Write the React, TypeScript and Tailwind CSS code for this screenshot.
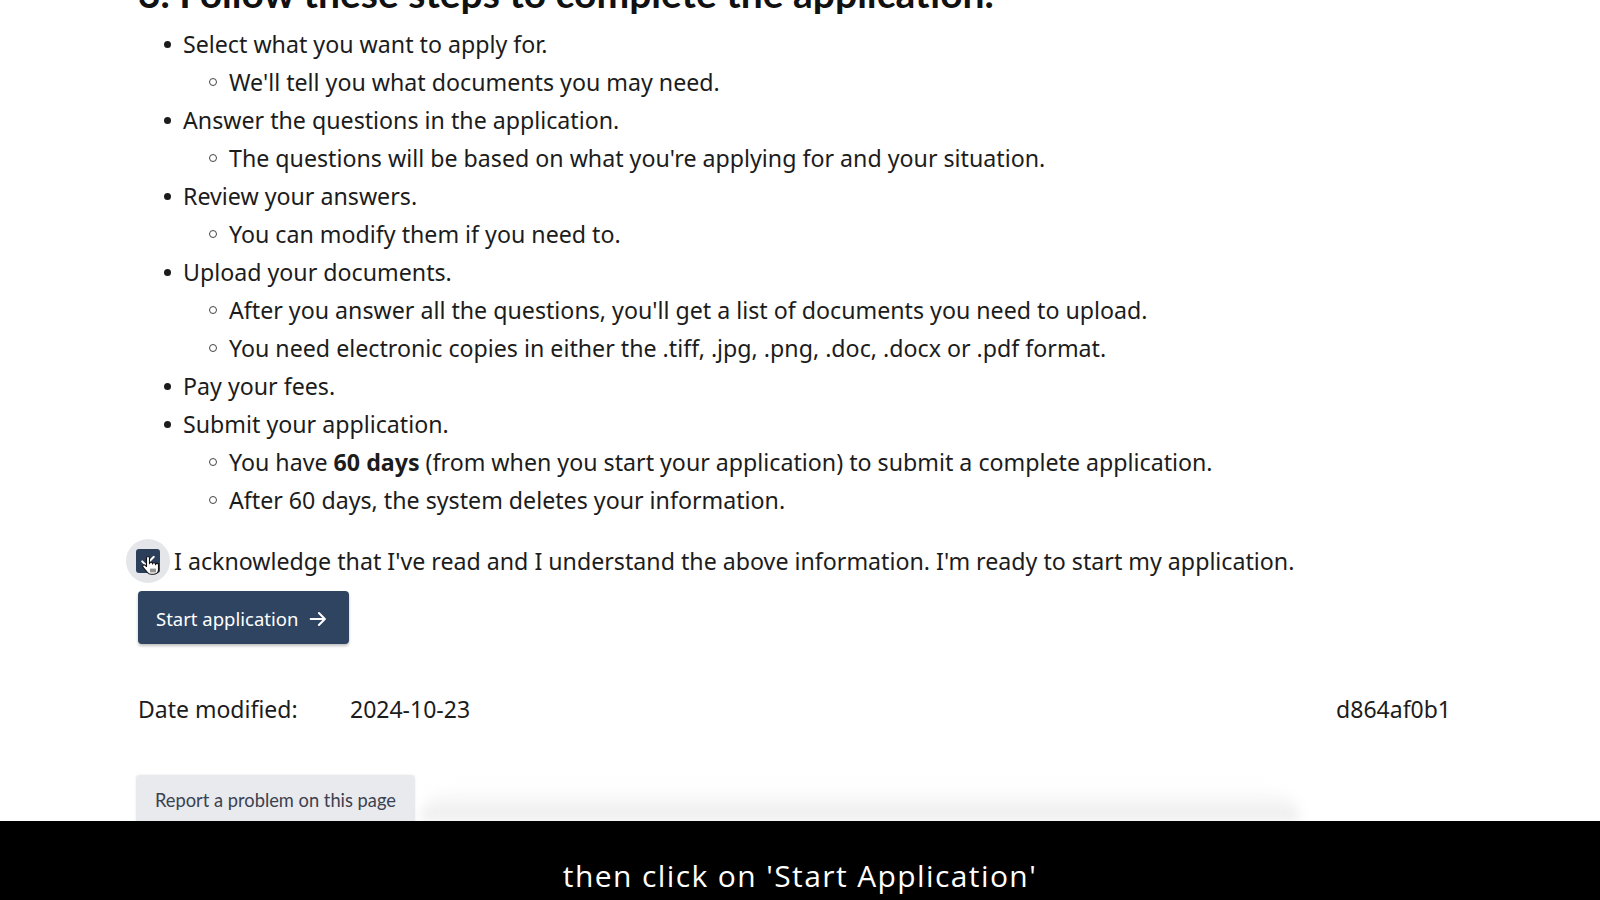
import React from "react";

const steps: { text: React.ReactNode; sub: React.ReactNode[] }[] = [
  {
    text: "Select what you want to apply for.",
    sub: ["We'll tell you what documents you may need."]
  },
  {
    text: "Answer the questions in the application.",
    sub: [
      "The questions will be based on what you're applying for and your situation."
    ]
  },
  {
    text: "Review your answers.",
    sub: ["You can modify them if you need to."]
  },
  {
    text: "Upload your documents.",
    sub: [
      "After you answer all the questions, you'll get a list of documents you need to upload.",
      "You need electronic copies in either the .tiff, .jpg, .png, .doc, .docx or .pdf format."
    ]
  },
  { text: "Pay your fees.", sub: [] },
  {
    text: "Submit your application.",
    sub: [
      <>
        You have <strong className="font-bold">60 days</strong> (from when you
        start your application) to submit a complete application.
      </>,
      "After 60 days, the system deletes your information."
    ]
  }
];

const body = { fontFamily: '"Noto Sans", "Open Sans", sans-serif' };

function HandCursor() {
  return (
    <svg
      viewBox="0 0 17 21"
      className="pointer-events-none absolute left-[142px] top-[555px] h-[21px] w-[17px]"
    >
      <path
        d="M6 1.5c-.8 0-1.5.7-1.5 1.5v8.5l-1.2-1.2c-.6-.6-1.6-.6-2.2 0-.6.6-.6 1.5 0 2.1l4.4 5.1c.9 1.1 2.2 1.7 3.6 1.7h2.9c2.6 0 4.5-2 4.5-4.6V9.8c0-.8-.7-1.4-1.5-1.4s-1.5.6-1.5 1.4V9c0-.8-.7-1.4-1.5-1.4S10.5 8.2 10.5 9v-.3c0-.8-.7-1.4-1.5-1.4s-1.5.6-1.5 1.4V3c0-.8-.7-1.5-1.5-1.5z"
        fill="#fff"
        stroke="#111"
        strokeWidth="1.1"
        strokeLinejoin="round"
      />
      <path
        d="M9 14v3M11 14v3M13 14v3"
        stroke="#111"
        strokeWidth="0.9"
        strokeLinecap="round"
      />
    </svg>
  );
}

export default function App() {
  return (
    <div className="relative flex h-[900px] w-full flex-col overflow-hidden bg-white">
      <div className="relative h-[821px] overflow-hidden bg-white">
        <div className="pl-[138px] text-[#1c1c1c]" style={body}>
          <h2
            className="mt-[-30px] text-[39px] font-bold leading-[46px] text-[#111]"
            style={{ fontFamily: 'Lato, "Noto Sans", sans-serif' }}
          >
            3. Follow these steps to complete the application.
          </h2>

          <ul className="mt-[9px] text-[23.2px]">
            {steps.map((s, i) => (
              <li key={i}>
                <div className="flex h-[38px] items-center">
                  <span className="ml-[26px] mr-[12px] h-[7px] w-[7px] rounded-full bg-[#1c1c1c]" />
                  <span>{s.text}</span>
                </div>
                {s.sub.map((t, j) => (
                  <div key={j} className="flex h-[38px] items-center">
                    <span className="ml-[71px] mr-[12px] h-[8px] w-[8px] rounded-full border border-[#444]" />
                    <span>{t}</span>
                  </div>
                ))}
              </li>
            ))}
          </ul>

          <label className="mt-[20px] flex h-[44px] items-center text-[23.2px]">
            <span className="-ml-[12px] flex h-[44px] w-[44px] items-center justify-center rounded-full bg-[#e4e6e9]">
              <span className="flex h-[24px] w-[24px] items-center justify-center rounded-[3px] bg-[#2b3f5a]">
                <svg viewBox="0 0 24 24" className="h-[20px] w-[20px]">
                  <path
                    d="M5 12.5l4.2 4.2L19 7"
                    fill="none"
                    stroke="#fff"
                    strokeWidth="2.4"
                    strokeLinecap="round"
                    strokeLinejoin="round"
                  />
                </svg>
              </span>
            </span>
            <span className="ml-[4px]">
              I acknowledge that I've read and I understand the above
              information. I'm ready to start my application.
            </span>
          </label>

          <button
            type="button"
            className="mt-[8px] flex h-[53px] w-[211px] items-center gap-[9px] rounded-[4px] bg-[#2e4461] pl-[18px] pt-[2px] text-[18.5px] text-white shadow-[0_2px_3px_rgba(0,0,0,0.25)]"
          >
            Start application
            <svg viewBox="0 0 24 24" className="h-[22px] w-[22px]">
              <path
                d="M4 12h15M13 5.5l6.5 6.5-6.5 6.5"
                fill="none"
                stroke="#fff"
                strokeWidth="2.2"
                strokeLinecap="round"
                strokeLinejoin="round"
              />
            </svg>
          </button>

          <div className="mt-[50px] flex h-[30px] items-center justify-between pr-[149px] text-[23px]">
            <div className="flex">
              <span className="w-[212px]">Date modified:</span>
              <span>2024-10-23</span>
            </div>
            <span>d864af0b1</span>
          </div>

          <div
            className="-ml-[2px] mt-[51px] h-[56px] w-[279px] rounded-t-[4px] bg-[#e8eaed] pl-[19px] pt-[13px] text-[18.3px] leading-[24px] text-[#3b4150] shadow-[0_0_3px_rgba(0,0,0,0.08)]"
            style={{ fontFamily: 'Lato, "Noto Sans", sans-serif' }}
          >
            Report a problem on this page
          </div>
        </div>

        <div className="pointer-events-none absolute bottom-0 left-[420px] h-[34px] w-[880px] rounded-t-[40px] bg-gradient-to-b from-transparent to-[#ebebeb] blur-[6px]" />
        <HandCursor />
      </div>

      <div
        className="h-[79px] bg-black pt-[37px] text-center text-[30px] leading-[36px] tracking-[1.4px] text-white"
        style={{ fontFamily: '"Open Sans", "Noto Sans", sans-serif' }}
      >
        then click on 'Start Application'
      </div>
    </div>
  );
}
